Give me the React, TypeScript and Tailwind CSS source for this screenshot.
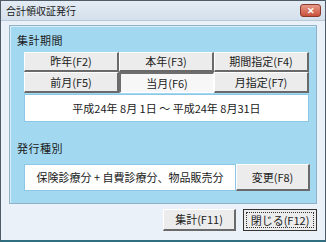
const font = { fontFamily: '"Noto Sans CJK JP", "Liberation Sans", sans-serif' };

function RaisedButton({ label, pressed, className }: { label: string; pressed?: boolean; className?: string }) {
  return (
    <div
      className={
        'flex items-center justify-center text-[11px] leading-none text-[#222] ' +
        (pressed
          ? 'bg-[#f7f7f7] border-t-2 border-l-2 border-b border-r border-t-[#6e6e6e] border-l-[#6e6e6e] border-b-white border-r-white '
          : 'bg-[#ececec] border-t border-l border-b-2 border-r-2 border-t-white border-l-white border-b-[#6a6a6a] border-r-[#6a6a6a] ') +
        (className || '')
      }
    >
      {label}
    </div>
  );
}

export default function App() {
  return (
    <div style={font} className="w-[326px] h-[242px] flex flex-col bg-[#eaf1f8] border border-[#4f5b66] border-b-2 border-b-[#2f6f80] overflow-hidden">
      {/* Title bar */}
      <div className="h-[20px] flex items-center justify-between pl-[5px] pr-[4px] bg-gradient-to-b from-[#e4ecf4] to-[#d4e0ec] border-b border-[#b9c8d6]">
        <span className="text-[10px] text-[#1a1a1a] leading-none">合計領収証発行</span>
        <div className="w-[21px] h-[13px] rounded-[3px] border border-[#8a3a2e] bg-gradient-to-b from-[#e79a8a] to-[#c8503c] flex items-center justify-center">
          <span className="text-white text-[9px] font-bold leading-none">✕</span>
        </div>
      </div>

      {/* Body */}
      <div className="flex-1 flex flex-col px-[8px] pt-[4px]">
        <div className="h-[179px] bg-[#a3d8f1] border border-[#8fb2c8] shadow-[inset_1px_1px_0_#d6eefa] flex flex-col pl-[7px] pr-[6px]">
          <div className="h-[26px] pt-[9px] text-[11px] leading-none text-[#1a1a1a] tracking-[0.5px]">集計期間</div>
          <div className="pl-[7px] flex flex-col">
            <div className="flex">
              <RaisedButton label="昨年(F2)" className="w-[95px] h-[20px]" />
              <RaisedButton label="本年(F3)" className="w-[95px] h-[20px]" />
              <RaisedButton label="期間指定(F4)" className="w-[95px] h-[20px]" />
            </div>
            <div className="flex">
              <RaisedButton label="前月(F5)" className="w-[95px] h-[21px]" />
              <RaisedButton label="当月(F6)" pressed className="w-[95px] h-[21px]" />
              <RaisedButton label="月指定(F7)" className="w-[95px] h-[21px]" />
            </div>
            <div className="mt-[1px] w-[285px] h-[28px] bg-white border border-[#8cc8e6] flex items-center justify-center text-[11px] text-[#1a1a1a] whitespace-pre">
              平成24年 8月 1日 ～ 平成24年 8月31日
            </div>
          </div>
          <div className="h-[42px] pt-[21px] text-[11px] leading-none text-[#1a1a1a] tracking-[0.5px]">発行種別</div>
          <div className="pl-[7px] flex">
            <div className="w-[212px] h-[27px] bg-white border border-[#8cc8e6] flex items-center justify-center text-[11px] text-[#1a1a1a]">
              保険診療分 + 自費診療分、物品販売分
            </div>
            <RaisedButton label="変更(F8)" className="w-[74px] h-[27px]" />
          </div>
        </div>

        {/* Footer buttons */}
        <div className="flex justify-end gap-[7px] pt-[5px]">
          <RaisedButton label="集計(F11)" className="w-[73px] h-[22px]" />
          <div className="w-[74px] h-[22px] bg-[#ececec] border border-[#333] flex items-center justify-center p-[2px]">
            <div className="w-full h-full border border-dotted border-[#333] flex items-center justify-center text-[11px] leading-none text-[#222]">
              閉じる(F12)
            </div>
          </div>
        </div>
      </div>
    </div>
  );
}
